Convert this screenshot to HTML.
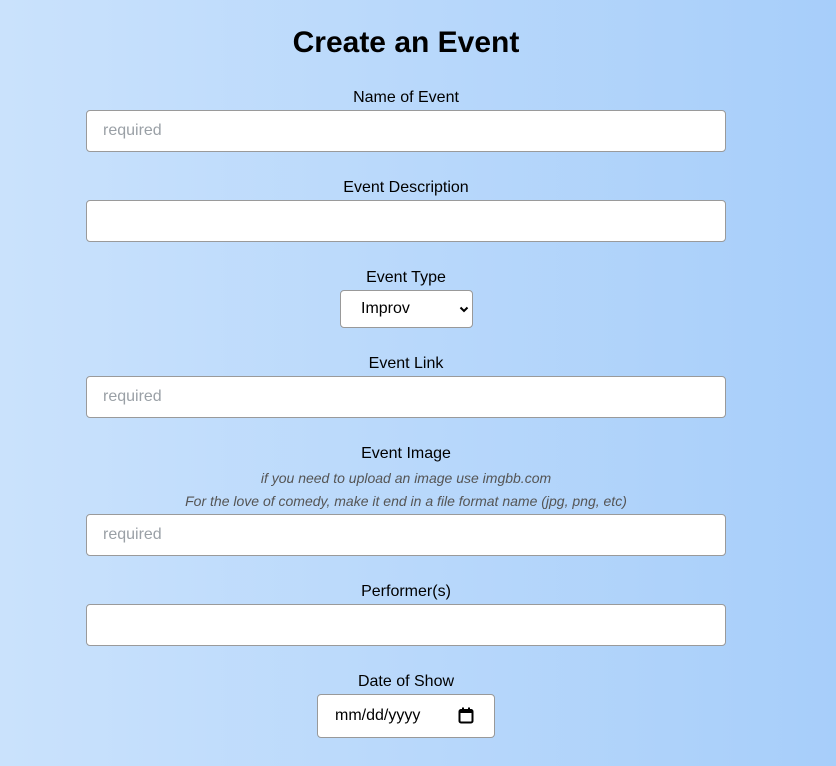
<!DOCTYPE html>
<html><head><style>
body{margin:0;width:836px;height:766px;overflow:hidden;background:linear-gradient(to right,#cae2fc,#a7cefa);font-family:"Liberation Sans",Arial,sans-serif;position:relative}
.a{position:absolute;left:0;width:812px;text-align:center;color:#000}
h1{position:absolute;margin:0;left:0;width:812px;text-align:center;font-size:30px;font-weight:bold;top:26px}
.l{font-size:16px;line-height:18px}
.s{font-size:14px;font-style:italic;color:#555;line-height:16px}
.i{position:absolute;left:86px;width:638px;height:40px;background:#fff;border:1px solid #9a9a9a;border-radius:4px;box-sizing:content-box}
.p{position:absolute;left:16px;top:11px;font-size:16px;color:#9aa0a6}
.sel{position:absolute;left:340px;top:290px;width:131px;height:36px;background:#fff;border:1px solid #999;border-radius:4px}
.dt{position:absolute;left:317px;top:694px;width:176px;height:42px;background:#fff;border:1px solid #999;border-radius:4px}
</style></head><body>
<h1>Create an Event</h1>
<div class="a l" style="top:89px">Name of Event</div>
<div class="i" style="top:110px"><span class="p">required</span></div>
<div class="a l" style="top:179px">Event Description</div>
<div class="i" style="top:200px"></div>
<div class="a l" style="top:269px">Event Type</div>
<div class="sel"><span style="position:absolute;left:20px;top:9px;font-size:16px">Improv</span>
<svg style="position:absolute;left:118px;top:15px" width="10" height="7" viewBox="0 0 10 7"><path d="M1.5 1.5L5 5L8.5 1.5" fill="none" stroke="#000" stroke-width="2"/></svg></div>
<div class="a l" style="top:355px">Event Link</div>
<div class="i" style="top:376px"><span class="p">required</span></div>
<div class="a l" style="top:445px">Event Image</div>
<div class="a s" style="top:470px">if you need to upload an image use imgbb.com</div>
<div class="a s" style="top:493px">For the love of comedy, make it end in a file format name (jpg, png, etc)</div>
<div class="i" style="top:514px"><span class="p">required</span></div>
<div class="a l" style="top:583px">Performer(s)</div>
<div class="i" style="top:604px"></div>
<div class="a l" style="top:673px">Date of Show</div>
<div class="dt"><span style="position:absolute;left:17px;top:12px;font-size:16px">mm/dd/yyyy</span>
<svg style="position:absolute;left:140px;top:12px" width="16" height="17" viewBox="0 0 16 17"><rect x="1.5" y="3" width="13" height="12.5" rx="1.5" fill="none" stroke="#000" stroke-width="2"/><rect x="1.5" y="3" width="13" height="3" fill="#000"/><rect x="4" y="0.5" width="2" height="3" fill="#000"/><rect x="10" y="0.5" width="2" height="3" fill="#000"/></svg></div>
</body></html>
